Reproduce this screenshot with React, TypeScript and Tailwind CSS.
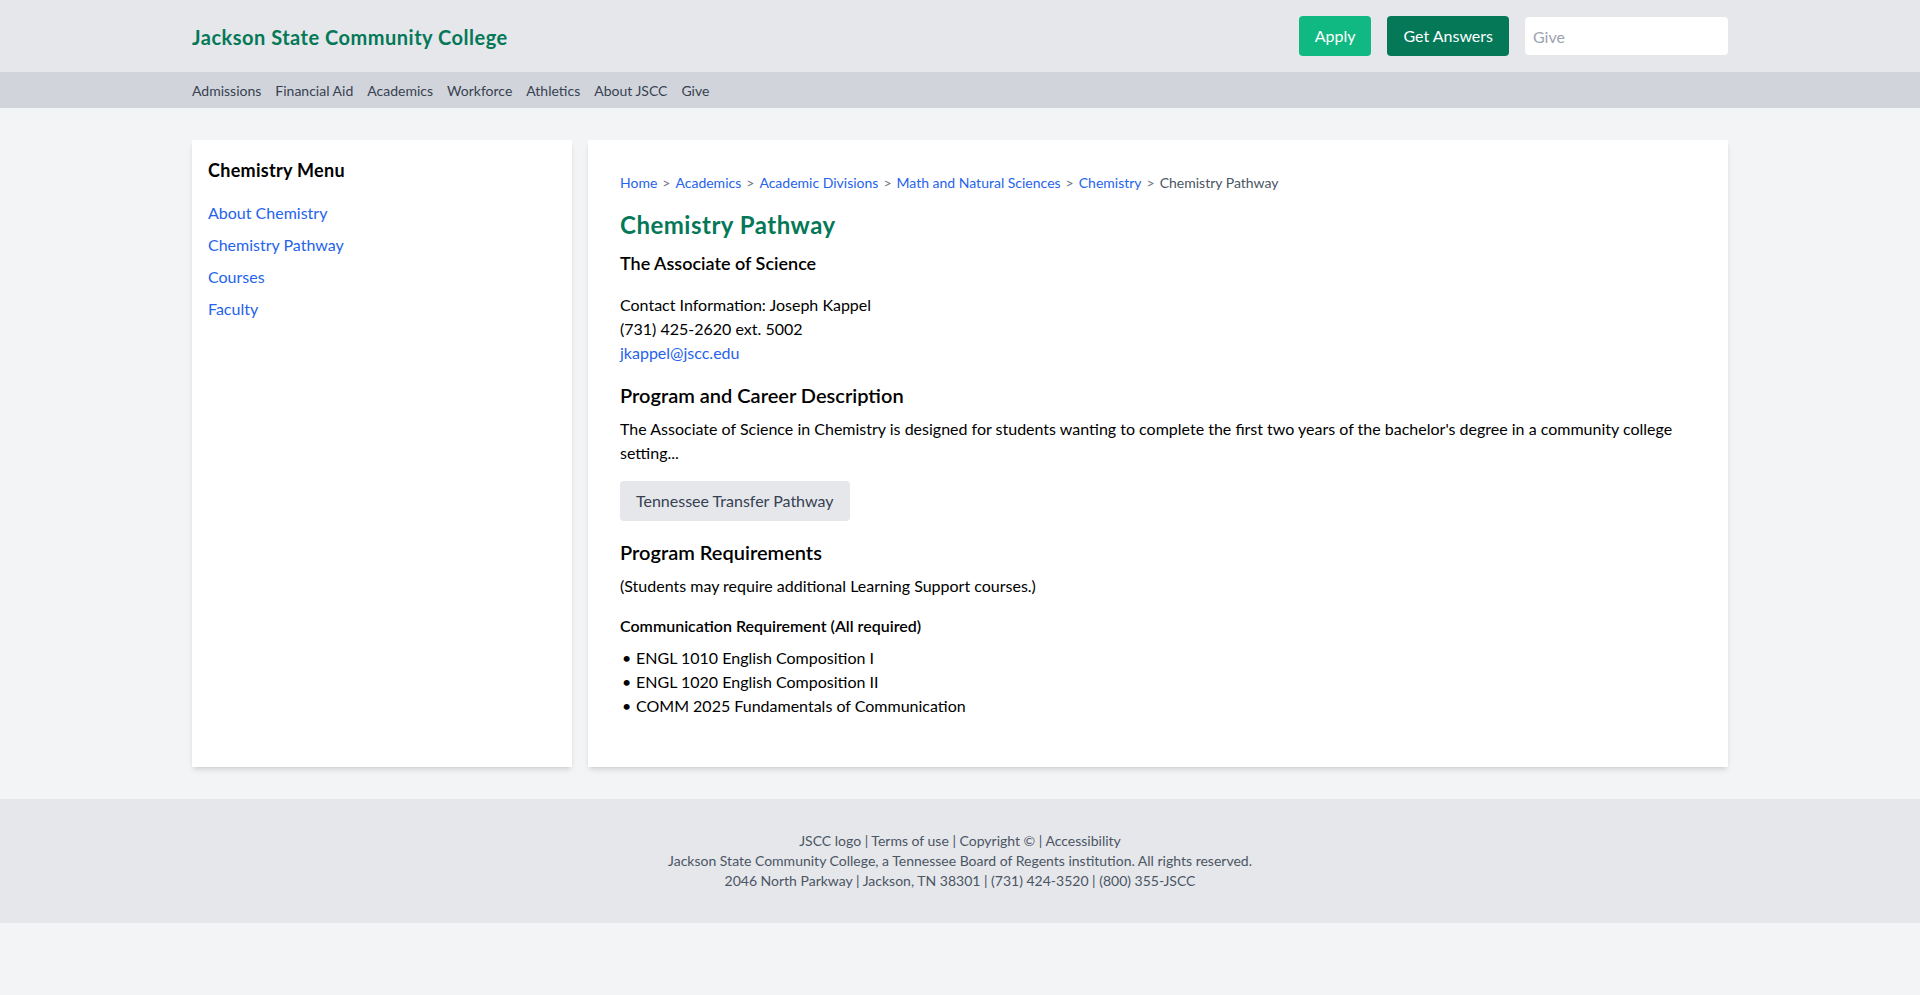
import React from 'react';

const navItems = ['Admissions', 'Financial Aid', 'Academics', 'Workforce', 'Athletics', 'About JSCC', 'Give'];
const sideLinks = ['About Chemistry', 'Chemistry Pathway', 'Courses', 'Faculty'];
const crumbs = ['Home', 'Academics', 'Academic Divisions', 'Math and Natural Sciences', 'Chemistry'];
const courses = [
  'ENGL 1010 English Composition I',
  'ENGL 1020 English Composition II',
  'COMM 2025 Fundamentals of Communication',
];

export default function App() {
  return (
    <div className="min-h-screen bg-[#f3f4f6] font-['Lato','Liberation_Sans',sans-serif] text-black">
      {/* Header */}
      <header className="bg-[#e5e7eb]">
        <div className="max-w-[1536px] mx-auto flex items-center justify-between py-4">
          <div className="text-xl font-bold tracking-[0.5px] text-[#047857] pt-px">Jackson State Community College</div>
          <div className="flex items-center gap-4">
            <button className="h-10 px-4 rounded bg-[#10b981] text-white text-base">Apply</button>
            <button className="h-10 px-4 rounded bg-[#047857] text-white text-base">Get Answers</button>
            <input
              className="h-[38px] w-[203px] px-2 rounded bg-white text-base placeholder:text-[#9ca3af] outline-none"
              placeholder="Give"
            />
          </div>
        </div>
      </header>

      {/* Nav */}
      <nav className="bg-[#d1d5db]">
        <div className="max-w-[1536px] mx-auto flex gap-[14px] pt-[9px] pb-[7px] text-sm text-[#374151]">
          {navItems.map((item) => (
            <a key={item} href="#">{item}</a>
          ))}
        </div>
      </nav>

      {/* Main */}
      <main className="max-w-[1536px] mx-auto py-8 grid grid-cols-[1fr_3fr] gap-4">
        <aside className="bg-white shadow-md p-4">
          <h2 className="text-lg font-bold tracking-[0.3px] mb-[17px]">Chemistry Menu</h2>
          <ul className="space-y-2">
            {sideLinks.map((l) => (
              <li key={l}>
                <a href="#" className="text-[#2563eb]">{l}</a>
              </li>
            ))}
          </ul>
        </aside>

        <section className="bg-white shadow-md px-8 pt-[33px] pb-8">
          <div className="text-sm mb-4">
            {crumbs.map((c) => (
              <span key={c}>
                <a href="#" className="text-[#2563eb]">{c}</a>
                <span className="mx-[5px] text-[#6b7280]">&gt;</span>
              </span>
            ))}
            <span className="text-[#4b5563]">Chemistry Pathway</span>
          </div>

          <h1 className="text-2xl font-bold tracking-[0.5px] text-[#047857] mb-2">Chemistry Pathway</h1>
          <h2 className="text-lg font-semibold mb-4">The Associate of Science</h2>

          <div className="mb-4">
            <p>Contact Information: Joseph Kappel</p>
            <p>(731) 425-2620 ext. 5002</p>
            <a href="#" className="text-[#2563eb]">jkappel@jscc.edu</a>
          </div>

          <h2 className="text-xl font-semibold mb-2">Program and Career Description</h2>
          <p className="mb-4 max-w-[1068px]">
            The Associate of Science in Chemistry is designed for students wanting to complete the first two years of the bachelor's degree in a community college setting...
          </p>
          <button className="px-4 py-2 rounded bg-[#e5e7eb] text-[#374151] mb-[17px]">Tennessee Transfer Pathway</button>

          <h2 className="text-xl font-semibold mb-2">Program Requirements</h2>
          <p className="mb-4">(Students may require additional Learning Support courses.)</p>

          <h3 className="font-semibold mb-2">Communication Requirement (All required)</h3>
          <ul className="pl-[2px] mb-[17px]">
            {courses.map((c) => (
              <li key={c} className="flex">
                <span className="w-[14px] shrink-0">•</span>
                <span>{c}</span>
              </li>
            ))}
          </ul>
        </section>
      </main>

      {/* Footer */}
      <footer className="bg-[#e5e7eb] py-8 text-center text-sm text-[#4b5563]">
        <p>JSCC logo | Terms of use | Copyright © | Accessibility</p>
        <p>Jackson State Community College, a Tennessee Board of Regents institution. All rights reserved.</p>
        <p>2046 North Parkway | Jackson, TN 38301 | (731) 424-3520 | (800) 355-JSCC</p>
      </footer>
    </div>
  );
}
